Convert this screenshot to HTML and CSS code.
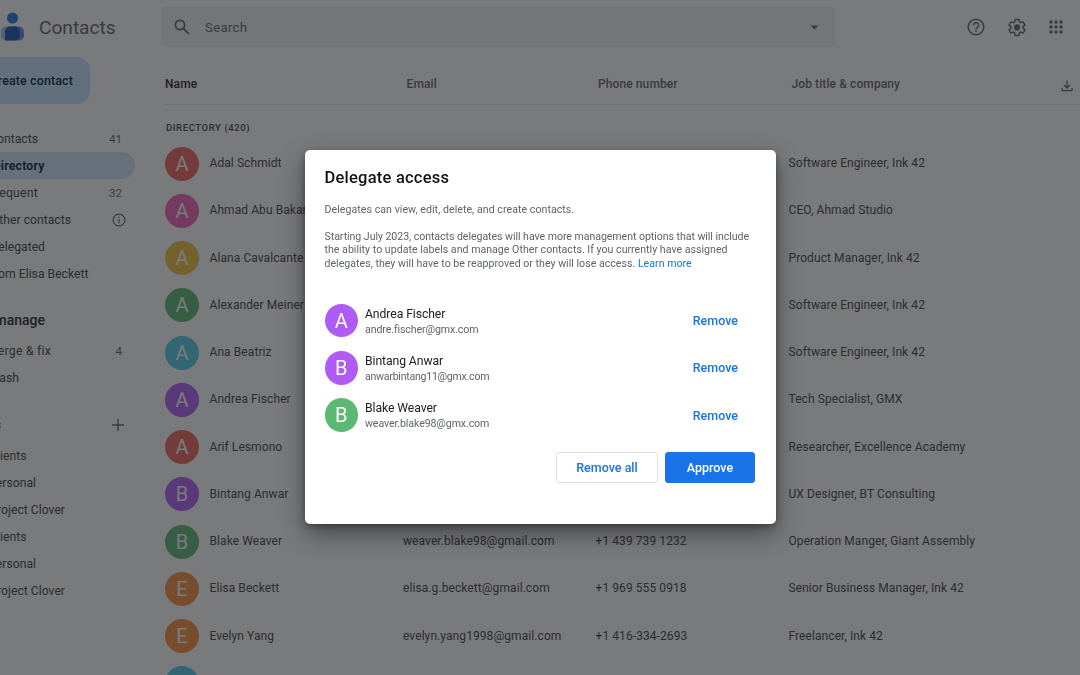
FILE: index.html
```
<!DOCTYPE html>
<html lang="en">
<head>
<meta charset="utf-8">
<title>Contacts</title>
<link rel="stylesheet" href="styles.css">
</head>
<body>
<div class="app">
  <aside class="sidebar">
    <div class="brand">
      <svg class="logo" width="25" height="30" viewBox="0 0 25 30"><rect x="1" y="14.5" width="18" height="14" rx="5" fill="#a9bdf5"/><rect x="8" y="14.5" width="16" height="14" rx="5" fill="#6d83f2"/><path d="M5 28.500V19.500a5 5 0 0 1 5-5h5a5 5 0 0 1 5 5v4a5 5 0 0 1-5 5z" fill="#1250b8"/><circle cx="12.500" cy="6" r="5.500" fill="#1a73e8"/></svg>
      <span class="brand-name">Contacts</span>
    </div>
    <button class="create"><span>Create contact</span></button>
    <nav class="nav">
      <a class="item"><span class="label w38">Contacts</span><span class="count">41</span></a>
      <a class="item active"><span class="label w44">Directory</span></a>
      <a class="item"><span class="label w38 wide">Frequent</span><span class="count">32</span></a>
      <a class="item"><span class="label w71">Other contacts</span><svg class="info" width="14" height="14" viewBox="0 0 14 14" fill="none" stroke="#5f6368" stroke-width="1.2"><circle cx="7" cy="7" r="5.900"/><path d="M7 6.300v4M7 3.700v1.400"/></svg></a>
      <a class="item"><span class="label w45">Delegated</span></a>
      <a class="item"><span class="label w88">From Elisa Beckett</span></a>
    </nav>
    <h2 class="section"><span class="label w45">Fix &amp; manage</span></h2>
    <nav class="nav">
      <a class="item"><span class="label w51 wide">Merge &amp; fix</span><span class="count">4</span></a>
      <a class="item"><span class="label w19">Trash</span></a>
    </nav>
    <div class="section labels"><span class="label w1">Labels</span><svg class="plus" width="12" height="12" viewBox="0 0 12 12" stroke="#5f6368" stroke-width="1.300"><path d="M6 0v12M0 6h12"/></svg></div>
    <nav class="nav">
      <a class="item"><span class="label w26">Clients</span></a>
      <a class="item"><span class="label w36">Personal</span></a>
      <a class="item"><span class="label w65">Project Clover</span></a>
      <a class="item"><span class="label w26">Clients</span></a>
      <a class="item"><span class="label w36">Personal</span></a>
      <a class="item"><span class="label w65">Project Clover</span></a>
    </nav>
  </aside>
  <main class="main">
    <header class="topbar">
      <div class="search">
        <svg width="16" height="16" viewBox="0 0 16 16" fill="none" stroke="#5f6368" stroke-width="1.800"><circle cx="6" cy="6" r="4.600"/><path d="M9.500 9.500l5.300 5.300"/></svg>
        <span class="search-text">Search</span>
        <svg width="9" height="5" viewBox="0 0 9 5"><path d="M.5.400h8l-4 4z" fill="#5f6368"/></svg>
      </div>
      <div class="tools">
        <svg width="18" height="18" viewBox="0 0 18 18" fill="none" stroke="#5f6368" stroke-width="1.500"><circle cx="9" cy="9" r="7.800"/><path d="M6.400 7.200a2.600 2.600 0 1 1 4.300 2C9.600 10 9 10.300 9 11.400M9 12.500v1.500"/></svg>
        <svg width="20" height="20" viewBox="0 0 24 24"><path fill="none" stroke="#5f6368" stroke-width="1.800" stroke-linejoin="round" d="M9.700 2.900h4.600l.5 2.900 1.700 1 2.800-1.100 2.300 4-2.300 1.900v1.800l2.300 1.900-2.300 4-2.800-1.100-1.700 1-.5 2.900H9.700l-.5-2.900-1.700-1-2.800 1.100-2.300-4 2.300-1.900v-1.800L2.400 9.700l2.300-4 2.800 1.100 1.700-1z"/><circle cx="12" cy="12.500" r="3.700" fill="#5f6368"/></svg>
        <svg width="14" height="14" viewBox="0 0 14 14" fill="#5f6368"><circle cx="2" cy="2" r="1.700"/><circle cx="7" cy="2" r="1.700"/><circle cx="12" cy="2" r="1.700"/><circle cx="2" cy="7" r="1.700"/><circle cx="7" cy="7" r="1.700"/><circle cx="12" cy="7" r="1.700"/><circle cx="2" cy="12" r="1.700"/><circle cx="7" cy="12" r="1.700"/><circle cx="12" cy="12" r="1.700"/></svg>
      </div>
    </header>
    <div class="thead">
      <span class="th-name">Name</span><span>Email</span><span>Phone number</span><span>Job title &amp; company</span>
      <svg width="12" height="12" viewBox="0 0 12 12" fill="none" stroke="#5f6368" stroke-width="1.300"><path d="M6 .5v7M3 5l3 3 3-3M1 8v2.600h10V8"/></svg>
    </div>
    <h3 class="group">DIRECTORY (420)</h3>
    <div class="rows">
      <div class="row"><i class="avatar red">A</i><span>Adal Schmidt</span><span></span><span></span><span>Software Engineer, Ink 42</span></div>
      <div class="row"><i class="avatar pink">A</i><span>Ahmad Abu Bakar</span><span></span><span></span><span>CEO, Ahmad Studio</span></div>
      <div class="row"><i class="avatar yellow">A</i><span>Alana Cavalcante</span><span></span><span></span><span>Product Manager, Ink 42</span></div>
      <div class="row"><i class="avatar green">A</i><span>Alexander Meiner</span><span></span><span></span><span>Software Engineer, Ink 42</span></div>
      <div class="row"><i class="avatar teal">A</i><span>Ana Beatriz</span><span></span><span></span><span>Software Engineer, Ink 42</span></div>
      <div class="row"><i class="avatar purple">A</i><span>Andrea Fischer</span><span></span><span></span><span>Tech Specialist, GMX</span></div>
      <div class="row"><i class="avatar red">A</i><span>Arif Lesmono</span><span></span><span></span><span>Researcher, Excellence Academy</span></div>
      <div class="row"><i class="avatar purple">B</i><span>Bintang Anwar</span><span></span><span></span><span>UX Designer, BT Consulting</span></div>
      <div class="row"><i class="avatar green">B</i><span>Blake Weaver</span><span>weaver.blake98@gmail.com</span><span>+1 439 739 1232</span><span>Operation Manger, Giant Assembly</span></div>
      <div class="row"><i class="avatar orange">E</i><span>Elisa Beckett</span><span>elisa.g.beckett@gmail.com</span><span>+1 969 555 0918</span><span>Senior Business Manager, Ink 42</span></div>
      <div class="row"><i class="avatar orange">E</i><span>Evelyn Yang</span><span>evelyn.yang1998@gmail.com</span><span>+1 416-334-2693</span><span>Freelancer, Ink 42</span></div>
      <div class="row"><i class="avatar teal"></i></div>
    </div>
  </main>
</div>
<div class="scrim">
  <section class="dialog" role="dialog">
    <h1 class="title">Delegate access</h1>
    <p class="copy intro">Delegates can view, edit, delete, and create contacts.</p>
    <p class="copy notice"><span class="l1">Starting July 2023, contacts delegates will have more management options that will include</span><br><span class="l2">the ability to update labels and manage Other contacts. If you currently have assigned</span><br><span class="l3">delegates, they will have to be reapproved or they will lose access. <a class="link">Learn more</a></span></p>
    <div class="people">
      <div class="person"><i class="avatar purple">A</i><div class="who"><b>Andrea Fischer</b><small>andre.fischer@gmx.com</small></div><a class="remove">Remove</a></div>
      <div class="person"><i class="avatar purple">B</i><div class="who"><b>Bintang Anwar</b><small class="tight">anwarbintang11@gmx.com</small></div><a class="remove">Remove</a></div>
      <div class="person"><i class="avatar green">B</i><div class="who"><b>Blake Weaver</b><small>weaver.blake98@gmx.com</small></div><a class="remove">Remove</a></div>
    </div>
    <div class="actions"><button class="btn">Remove all</button><button class="btn primary">Approve</button></div>
  </section>
</div>
</body>
</html>
```
FILE: styles.css
```
* { box-sizing: border-box; }
body { margin: 0; height: 675px; overflow: hidden; font-family: Roboto, sans-serif; color: #3c4043; background: #fff; }
h1, h2, h3, p { margin: 0; }
button { border: 0; font-family: inherit; padding: 0; }
svg { flex: none; display: block; }
.app { display: flex; height: 675px; overflow: hidden; }

.sidebar { width: 161px; flex: none; }
.brand { display: flex; align-items: center; height: 57px; padding-bottom: 3px; }
.logo { margin-bottom: 1px; }
.brand-name { margin-left: 14px; font-size: 19.2px; letter-spacing: -.05px; color: #5f6368; }
.create { display: flex; justify-content: flex-end; align-items: center; width: 90px; height: 47px; padding-right: 17px; border-radius: 0 13px 13px 0; background: #c2e7ff; color: #001d35; font-size: 12.500px; font-weight: 500; letter-spacing: .1px; white-space: nowrap; }
.nav { font-size: 12.200px; }
.create + .nav { margin-top: 21px; }
.item { display: flex; align-items: center; width: 135px; height: 27px; }
.label { display: flex; justify-content: flex-end; white-space: nowrap; flex: none; }
.wide { letter-spacing: .25px; }
.w1 { width: 1px; } .w19 { width: 19px; } .w26 { width: 26.500px; } .w36 { width: 36px; } .w38 { width: 38px; } .w44 { width: 44.500px; } .w45 { width: 45px; } .w51 { width: 51px; } .w65 { width: 65px; } .w71 { width: 71px; } .w88 { width: 88.500px; }
.active { border-radius: 0 14px 14px 0; background: #d3e3fd; color: #041e49; font-weight: 700; letter-spacing: .2px; }
.count { margin-left: auto; padding-right: 13px; font-size: 11.600px; color: #5f6368; }
.info { margin-left: auto; margin-right: 9px; }
.section { display: flex; align-items: center; height: 31px; margin-top: 17px; font-size: 14px; font-weight: 500; color: #202124; }
.section + .nav { margin-top: 2px; }
.section.labels { justify-content: space-between; width: 124px; margin-top: 18px; font-size: 12.500px; }
.section.labels + .nav { margin-top: 2px; }

.main { flex: 1; display: flex; flex-direction: column; }
.main > * { flex: none; }
.topbar { display: flex; align-items: center; justify-content: space-between; height: 54px; padding-right: 17px; }
.search { display: flex; align-items: center; width: 674px; height: 40px; padding: 0 16px 0 13px; border-radius: 3px; background: #f1f3f4; }
.search-text { flex: 1; margin-left: 15px; font-size: 13.300px; letter-spacing: .25px; color: #5f6368; }
.tools { display: flex; align-items: center; gap: 22px; }
.thead { display: grid; grid-template-columns: 241.500px 191.500px 193.500px 1fr 12px; align-items: center; height: 51px; margin-left: 4px; padding: 10px 7px 0 0; border-bottom: 1px solid #e4e6e9; font-size: 12px; font-weight: 500; letter-spacing: .1px; color: #5f6368; }
.thead svg { margin-top: 3px; }
.th-name { color: #202124; }
.group { height: 41px; padding: 17px 0 0 5px; font-size: 9.500px; line-height: 12px; font-weight: 500; letter-spacing: .6px; color: #3c4043; }
.rows { margin-left: 4px; margin-top: -6px; }
.row { display: grid; grid-template-columns: 44.500px 193.500px 192.500px 193px 1fr; align-items: center; height: 47.250px; font-size: 12px; letter-spacing: .08px; white-space: nowrap; }
.row > span { padding-bottom: 1px; }
.avatar { display: flex; align-items: center; justify-content: center; width: 34px; height: 34px; border-radius: 50%; color: #fff; font-size: 20px; font-style: normal; letter-spacing: 0; flex: none; }
.red { background: #f0655c; } .pink { background: #f063b8; } .yellow { background: #f5c037; } .green { background: #5bb974; } .teal { background: #4ecde6; } .purple { background: #af5cf7; } .orange { background: #fa903e; }

.scrim { position: fixed; inset: 0; display: flex; align-items: flex-start; padding: 150px 0 0 304.500px; background: rgba(32, 33, 36, .6); }
.dialog { width: 471px; height: 374px; padding: 17px 20.500px 17px 20px; border-radius: 5px; background: #fff; box-shadow: 0 10px 24px rgba(0, 0, 0, .42), 0 2px 6px rgba(0, 0, 0, .3); }
.title { font-size: 16.500px; line-height: 21px; font-weight: 500; color: #111; letter-spacing: .23px; }
.copy { font-size: 10.600px; line-height: 13.500px; color: #5f6368; white-space: nowrap; }
.intro { margin-top: 14.500px; letter-spacing: .05px; }
.notice { margin-top: 13.500px; }
.l1 { letter-spacing: -.055px; } .l2, .l3 { letter-spacing: .015px; }
.link { color: #1a73e8; }
.people { margin-top: 27px; }
.person { display: flex; align-items: center; height: 47.250px; }
.person .avatar { width: 33.500px; height: 33.500px; }
.who { margin-left: 7px; padding-top: 2.500px; flex: 1; display: flex; flex-direction: column; }
.who b { font-size: 12.200px; line-height: 15px; font-weight: 400; color: #202124; letter-spacing: -.08px; }
.who small { font-size: 10.600px; line-height: 15px; color: #5f6368; letter-spacing: -.1px; }
.who .tight { letter-spacing: -.26px; }
.remove { padding-right: 17px; font-size: 12.500px; font-weight: 500; color: #1a73e8; }
.actions { display: flex; justify-content: flex-end; gap: 7px; margin-top: 13.500px; }
.btn { width: 102px; height: 31px; border: 1px solid #dfe1e5; border-radius: 3px; background: #fff; color: #1a73e8; font-size: 12.500px; font-weight: 500; }
.primary { width: 90px; border-color: #1a73e8; background: #1a73e8; color: #fff; }
```
